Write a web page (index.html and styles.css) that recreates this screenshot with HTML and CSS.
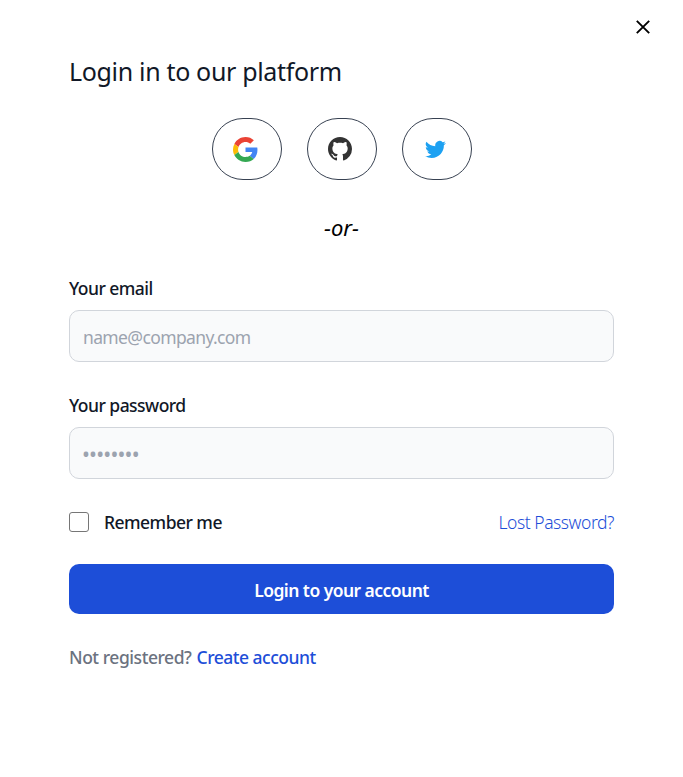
FILE: index.html
```html
<!DOCTYPE html>
<html lang="en">
<head>
<meta charset="utf-8">
<title>Login</title>
<link rel="stylesheet" href="styles.css">
</head>
<body>
<main class="modal">
  <button class="close" type="button" aria-label="Close"><svg width="14" height="14" viewBox="0 0 14 14"><path d="M.8.8 13.2 13.2M13.2.8.8 13.2" stroke="#000" stroke-width="1.9" fill="none"/></svg></button>
  <h1 class="title">Login in to our platform</h1>
  <div class="social">
    <button type="button" class="provider" aria-label="Google"><svg class="google" width="25" height="25" viewBox="0 0 48 48"><path fill="#EA4335" d="M24 9.5c3.54 0 6.71 1.22 9.21 3.6l6.85-6.85C35.9 2.38 30.47 0 24 0 14.62 0 6.51 5.38 2.56 13.22l7.98 6.19C12.43 13.72 17.74 9.5 24 9.5z"/><path fill="#4285F4" d="M46.98 24.55c0-1.57-.15-3.09-.38-4.55H24v9.02h12.94c-.58 2.96-2.26 5.48-4.78 7.18l7.73 6c4.51-4.18 7.09-10.36 7.09-17.65z"/><path fill="#FBBC05" d="M10.53 28.59c-.48-1.45-.76-2.99-.76-4.59s.27-3.14.76-4.59l-7.98-6.19C.92 16.46 0 20.12 0 24c0 3.88.92 7.54 2.56 10.78l7.97-6.19z"/><path fill="#34A853" d="M24 48c6.48 0 11.93-2.13 15.89-5.81l-7.73-6c-2.15 1.45-4.92 2.3-8.16 2.3-6.26 0-11.57-4.22-13.47-9.91l-7.98 6.19C6.51 42.62 14.62 48 24 48z"/></svg></button>
    <button type="button" class="provider" aria-label="GitHub"><svg class="github" width="24" height="24" viewBox="0 0 16 16"><path fill="#333" d="M8 0C3.58 0 0 3.58 0 8c0 3.54 2.29 6.53 5.47 7.59.4.07.55-.17.55-.38 0-.19-.01-.82-.01-1.49-2.01.37-2.53-.49-2.69-.94-.09-.23-.48-.94-.82-1.13-.28-.15-.68-.52-.01-.53.63-.01 1.08.58 1.23.82.72 1.21 1.87.87 2.33.66.07-.52.28-.87.51-1.07-1.78-.2-3.64-.89-3.64-3.95 0-.87.31-1.59.82-2.15-.08-.2-.36-1.02.08-2.12 0 0 .67-.21 2.2.82.64-.18 1.32-.27 2-.27s1.36.09 2 .27c1.53-1.04 2.2-.82 2.2-.82.44 1.1.16 1.92.08 2.12.51.56.82 1.27.82 2.15 0 3.07-1.87 3.75-3.65 3.95.29.25.54.73.54 1.48 0 1.07-.01 1.93-.01 2.2 0 .21.15.46.55.38A8.01 8.01 0 0 0 16 8c0-4.42-3.58-8-8-8z"/></svg></button>
    <button type="button" class="provider" aria-label="Twitter"><svg class="twitter" width="21" height="21" viewBox="0 0 24 24"><path fill="#1DA1F2" d="M23.95 4.57a10 10 0 0 1-2.82.77 4.96 4.96 0 0 0 2.16-2.72c-.95.56-2 .96-3.13 1.19a4.92 4.92 0 0 0-8.38 4.48C7.69 8.09 4.07 6.13 1.64 3.16a4.92 4.92 0 0 0 1.52 6.57 4.9 4.9 0 0 1-2.23-.61v.06a4.92 4.92 0 0 0 3.95 4.83 5 5 0 0 1-2.21.08 4.94 4.94 0 0 0 4.6 3.42A9.87 9.87 0 0 1 0 19.54a13.99 13.99 0 0 0 7.55 2.21c9.05 0 14-7.5 14-13.98 0-.21 0-.42-.02-.63a9.94 9.94 0 0 0 2.46-2.55z"/></svg></button>
  </div>
  <p class="or">-or-</p>
  <form class="form">
    <label class="label" for="email">Your email</label>
    <input class="field" id="email" type="email" placeholder="name@company.com">
    <label class="label label-password" for="password">Your password</label>
    <input class="field field-password" id="password" type="password" placeholder="••••••••">
    <div class="options">
      <label class="remember"><input class="check" type="checkbox"><span>Remember me</span></label>
      <a class="lost">Lost Password?</a>
    </div>
    <button class="submit" type="button">Login to your account</button>
    <p class="register">Not registered? <a class="create">Create account</a></p>
  </form>
</main>
</body>
</html>
```
FILE: styles.css
```css
* { box-sizing: border-box; }
body { margin: 0; background: #fff; color: #111827; font: 470 17.5px/25px "Noto Sans", "Open Sans", sans-serif; letter-spacing: -.53px; }
button, input { font: inherit; letter-spacing: inherit; }
.modal { position: relative; height: 777px; padding: 54px 69px 0; }
.close { position: absolute; top: 20px; right: 33px; width: 14px; height: 14px; padding: 0; border: 0; background: none; }
svg { display: block; }
.title { margin: 0; font-size: 25px; line-height: 35px; font-weight: 440; letter-spacing: -.33px; }
.social { display: flex; justify-content: center; gap: 25px; margin-top: 29px; }
.provider { display: flex; align-items: center; width: 70px; height: 62px; padding: 0 20px; border: 1px solid #374151; border-radius: 32px; background: #fff; }
.twitter { margin-left: 2px; }
.or { margin: 32px 0 0; text-align: center; font-size: 22px; line-height: 30px; font-style: italic; font-weight: 400; letter-spacing: 0; color: #000; }
.form { margin-top: 34px; }
.label { display: block; }
.label-password { margin-top: 31px; }
.field { display: block; width: 100%; height: 52px; margin-top: 9px; padding: 2px 13px 0; border: 1px solid #d1d5db; border-radius: 10px; background: #f9fafb; font-weight: 400; letter-spacing: -.63px; }
.field::placeholder { color: #9ca3af; opacity: 1; }
.field-password { padding-left: 12px; font-size: 21px; letter-spacing: -.8px; }
.options { display: flex; justify-content: space-between; align-items: center; margin-top: 31px; }
.remember { display: flex; align-items: center; gap: 15px; }
.check { appearance: none; width: 20px; height: 20px; margin: 0 0 2px; border: 1px solid #767676; border-radius: 3px; background: #fff; }
.lost { color: #1d4ed8; font-weight: 340; letter-spacing: -.45px; }
.submit { display: block; width: 100%; height: 50px; margin-top: 29px; padding: 3px 0 0; border: 0; border-radius: 10px; background: #1d4ed8; color: #fff; font-weight: 600; letter-spacing: -.55px; }
.register { margin: 31px 0 0; color: #6b7280; font-weight: 500; letter-spacing: -.45px; }
.create { margin-left: 1px; color: #1d4ed8; letter-spacing: -.5px; }
```
